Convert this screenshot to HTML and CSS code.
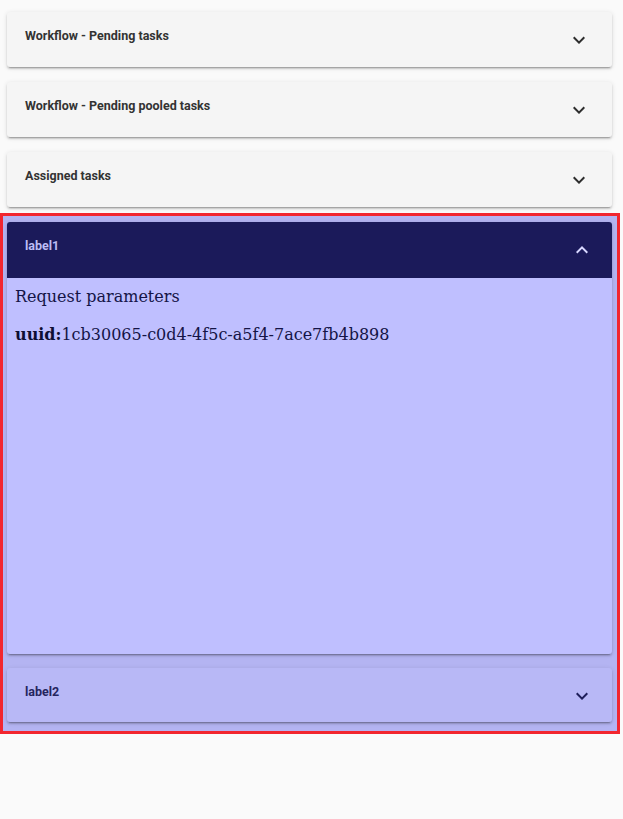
FILE: index.html
```html
<!DOCTYPE html>
<html>
<head>
<meta charset="utf-8">
<link rel="stylesheet" href="styles.css">
</head>
<body>
<div class="page">
  <div class="panel">
    <div class="panel-header">
      <span class="panel-title">Workflow - Pending tasks</span>
      <svg class="chev" viewBox="0 0 24 24"><path d="M16.59 8.59L12 13.17 7.41 8.59 6 10l6 6 6-6z"/></svg>
    </div>
  </div>
  <div class="panel">
    <div class="panel-header">
      <span class="panel-title">Workflow - Pending pooled tasks</span>
      <svg class="chev" viewBox="0 0 24 24"><path d="M16.59 8.59L12 13.17 7.41 8.59 6 10l6 6 6-6z"/></svg>
    </div>
  </div>
  <div class="panel">
    <div class="panel-header">
      <span class="panel-title">Assigned tasks</span>
      <svg class="chev" viewBox="0 0 24 24"><path d="M16.59 8.59L12 13.17 7.41 8.59 6 10l6 6 6-6z"/></svg>
    </div>
  </div>

  <div class="highlight">
    <div class="panel panel-open">
      <div class="panel-header header-dark">
        <span class="panel-title">label1</span>
        <svg class="chev" viewBox="0 0 24 24"><path d="M7.41 15.41L12 10.83l4.59 4.58L18 14l-6-6-6 6z"/></svg>
      </div>
      <div class="panel-body">
        <p class="body-line">Request parameters</p>
        <p class="body-line"><b>uuid:</b>1cb30065-c0d4-4f5c-a5f4-7ace7fb4b898</p>
      </div>
    </div>
    <div class="panel panel-blue">
      <div class="panel-header">
        <span class="panel-title">label2</span>
        <svg class="chev" viewBox="0 0 24 24"><path d="M16.59 8.59L12 13.17 7.41 8.59 6 10l6 6 6-6z"/></svg>
      </div>
    </div>
  </div>
</div>
</body>
</html>
```

FILE: styles.css
```css
html, body {
  margin: 0;
  padding: 0;
  background: #fafafa;
}

.page {
  width: 620px;
  padding-top: 12px;
  display: flex;
  flex-direction: column;
}

.panel {
  margin: 0 8px 15px 7px;
  background: #f5f5f5;
  border-radius: 3px;
  box-shadow: 0 3px 1px -2px rgba(0,0,0,.2), 0 2px 2px 0 rgba(0,0,0,.14), 0 1px 5px 0 rgba(0,0,0,.12);
  overflow: hidden;
}

.panel-header {
  height: 55px;
  box-sizing: border-box;
  padding: 0 21px 0 18px;
  display: flex;
  align-items: center;
  justify-content: space-between;
}

.panel-title {
  font-family: Roboto, "Liberation Sans", sans-serif;
  font-weight: 700;
  font-size: 12.5px;
  color: #333333;
  align-self: flex-start;
  margin-top: 17px;
  line-height: 14px;
}

.chev {
  width: 24px;
  height: 24px;
  fill: #2e2e2e;
}

.highlight {
  margin-top: -9px;
  border: 3px solid #f2262f;
  background: #b4b4f2;
  padding: 6px 0 0 0;
  display: flex;
  flex-direction: column;
}

.panel-open {
  margin: 0 5px 14px 4px;
  background: #bfbfff;
  height: 432px;
}

.highlight .panel-header {
  padding-right: 18px;
}

.header-dark {
  height: 56px;
  background: #1b1a5a;
}

.header-dark .panel-title {
  color: #bdbdf5;
}

.header-dark .chev {
  fill: #d8d8ff;
}

.panel-body {
  padding: 0 8px;
}

.body-line {
  font-family: "DejaVu Serif", serif;
  font-size: 16px;
  color: #141446;
  margin: 9px 0 19px;
  line-height: 19px;
}

.body-line b {
  color: #0e0e33;
}

.panel-blue {
  margin: 0 5px 9px 4px;
  background: #b8b8f6;
  height: 54px;
}

.panel-blue .panel-title {
  color: #25255e;
}

.panel-blue .chev {
  fill: #1f1f5a;
}
```
